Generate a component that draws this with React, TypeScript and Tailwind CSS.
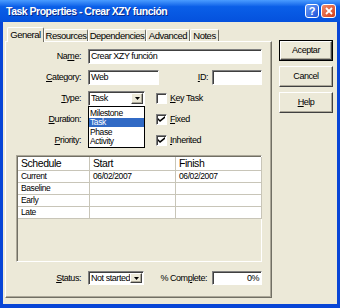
import React from 'react';

const sunken =
  'bg-white border border-t-[#808080] border-l-[#808080] border-r-white border-b-white shadow-[inset_1px_1px_0_#404040]';
const raised =
  'bg-[#ECE9D8] border border-t-white border-l-white border-r-[#404040] border-b-[#404040] shadow-[inset_-1px_-1px_0_#ACA899]';

const U = ({ children }: { children: React.ReactNode }) => <span className="underline">{children}</span>;

const Label = ({ children }: { children: React.ReactNode }) => (
  <div className="w-[76px] shrink-0 text-right pr-[1px] whitespace-nowrap">{children}</div>
);

const Arrow = () => (
  <div className={`${raised} w-[12px] h-full flex items-center justify-center`}>
    <svg width="5" height="3" viewBox="0 0 5 3">
      <path d="M0 0h5L2.5 3z" fill="#000" />
    </svg>
  </div>
);

const Select = ({ value, w }: { value: string; w: string }) => (
  <div className={`${sunken} ${w} h-full flex items-stretch p-[1px]`}>
    <div className="flex-1 pl-[1px] flex items-center whitespace-nowrap overflow-hidden">{value}</div>
    <Arrow />
  </div>
);

const Check = ({ checked, children }: { checked?: boolean; children: React.ReactNode }) => (
  <div className="flex items-center ml-[5px]">
    <div className={`${sunken} w-[11px] h-[11px] flex items-center justify-center`}>
      {checked && (
        <svg width="7" height="7" viewBox="0 0 7 7">
          <path d="M0 2l2 2 5-4v2L2 6 0 4z" fill="#000" />
        </svg>
      )}
    </div>
    <div className="ml-[3px] whitespace-nowrap">{children}</div>
  </div>
);

const Tab = ({ label, w, active }: { label: string; w: string; active?: boolean }) =>
  active ? (
    <div
      className={`${w} h-[15px] -mb-[1px] relative z-10 bg-[#ECE9D8] border-t border-l border-t-white border-l-white border-r border-r-[#716F64] rounded-t-[2px] flex items-center justify-center text-[9.5px] tracking-[-0.5px] whitespace-nowrap`}
    >
      {label}
    </div>
  ) : (
    <div
      className={`${w} h-[12px] mt-[2px] bg-[#ECE9D8] border-t border-l border-t-white border-l-white border-r border-r-[#716F64] rounded-t-[2px] flex items-center justify-center text-[9.5px] tracking-[-0.5px] whitespace-nowrap`}
    >
      {label}
    </div>
  );

const Button = ({ children, def }: { children: React.ReactNode; def?: boolean }) =>
  def ? (
    <div className="w-[54px] h-[21px] border border-black">
      <div className={`${raised} w-full h-full flex items-center justify-center`}>{children}</div>
    </div>
  ) : (
    <div className={`${raised} w-[54px] h-[21px] flex items-center justify-center`}>{children}</div>
  );

const rows = [
  ['Current', '06/02/2007', '06/02/2007'],
  ['Baseline', '', ''],
  ['Early', '', ''],
  ['Late', '', ''],
];

export default function App() {
  return (
    <div className="w-[340px] h-[308px] bg-[#0845d6] flex flex-col font-['Liberation_Sans',Arial,sans-serif] text-[9px] tracking-[-0.45px] text-black leading-none">
      {/* title bar */}
      <div className="h-[22px] shrink-0 flex items-center pl-[6px] pr-[4px] bg-linear-to-b from-[#4a9cff] via-[#0a5fe8] via-30% to-[#0551dd]">
        <span className="flex-1 text-white font-bold text-[10.5px] tracking-[-0.5px] whitespace-nowrap [text-shadow:1px_1px_0_#0a2a8a]">
          Task Properties - Crear XZY función
        </span>
        <div className="flex gap-[2px]">
          <div className="w-[14px] h-[14px] rounded-[3px] border border-white bg-linear-to-br from-[#6a9cf8] to-[#1f52d8] flex items-center justify-center text-white font-bold text-[11px] tracking-normal">
            ?
          </div>
          <div className="w-[15px] h-[14px] rounded-[3px] border border-white bg-linear-to-br from-[#f08a6a] to-[#d23c12] flex items-center justify-center">
            <svg width="8" height="8" viewBox="0 0 8 8">
              <path d="M1 1l6 6M7 1L1 7" stroke="#fff" strokeWidth="1.8" />
            </svg>
          </div>
        </div>
      </div>

      {/* body */}
      <div className="flex-1 mx-[3px] mb-[4px] bg-[#ECE9D8] flex pt-[5px] pl-[2px]">
        <div className="w-[267px] flex flex-col">
          <div className="flex items-start h-[14px] pl-[2px]">
            <Tab label="General" w="w-[37px]" active />
            <Tab label="Resources" w="w-[44px]" />
            <Tab label="Dependencies" w="w-[58px]" />
            <Tab label="Advanced" w="w-[44px]" />
            <Tab label="Notes" w="w-[29px]" />
          </div>
          <div className="h-[257px] border border-t-white border-l-white border-r-[#716F64] border-b-[#716F64] shadow-[inset_-1px_-1px_0_#ACA899] flex flex-col pt-[7px]">
            <div className="flex flex-col gap-[6px] w-[256px]">
              <div className="flex items-center h-[15px] gap-[6px]">
                <Label>
                  Na<U>m</U>e:
                </Label>
                <div className={`${sunken} w-[174px] h-full pl-[2px] flex items-center whitespace-nowrap`}>
                  Crear XZY función
                </div>
              </div>
              <div className="flex items-center h-[15px] gap-[6px]">
                <Label>
                  <U>C</U>ategory:
                </Label>
                <div className={`${sunken} w-[71px] h-full pl-[2px] flex items-center`}>Web</div>
                <div className="ml-auto">
                  <U>I</U>D:
                </div>
                <div className={`${sunken} w-[50px] h-full -ml-[2px]`} />
              </div>
              <div className="flex items-center h-[15px] gap-[6px]">
                <Label>
                  <U>T</U>ype:
                </Label>
                <div className="relative h-full">
                  <Select value="Task" w="w-[57px]" />
                  <div className="absolute left-0 top-full w-[57px] bg-white border border-black z-20 flex flex-col py-[1px] text-[8.5px] tracking-[-0.4px]">
                    <div className="h-[9.5px] pl-[1px] flex items-center">Milestone</div>
                    <div className="h-[9.5px] pl-[1px] flex items-center bg-[#316AC5] text-white">Task</div>
                    <div className="h-[9.5px] pl-[1px] flex items-center">Phase</div>
                    <div className="h-[9.5px] pl-[1px] flex items-center">Activity</div>
                  </div>
                </div>
                <Check>
                  <U>K</U>ey Task
                </Check>
              </div>
              <div className="flex items-center h-[15px] gap-[6px]">
                <Label>
                  <U>D</U>uration:
                </Label>
                <div className={`${sunken} w-[57px] h-full`} />
                <Check checked>
                  <U>F</U>ixed
                </Check>
              </div>
              <div className="flex items-center h-[15px] gap-[6px]">
                <Label>
                  <U>P</U>riority:
                </Label>
                <div className={`${sunken} w-[57px] h-full`} />
                <Check checked>
                  <U>I</U>nherited
                </Check>
              </div>
            </div>

            {/* schedule grid */}
            <div className="ml-[10px] mt-[7px] w-[246px] h-[107px] border border-t-[#ACA899] border-l-[#ACA899] border-r-white border-b-white shadow-[inset_1px_1px_0_#716F64] p-[1px]">
              <div className="grid grid-cols-[72px_86px_86px] bg-white w-fit">
                {['Schedule', 'Start', 'Finish'].map((h) => (
                  <div
                    key={h}
                    className="h-[14px] border-r border-b border-[#C8C5B8] pl-[3px] flex items-center text-[10.5px] tracking-[-0.45px]"
                  >
                    {h}
                  </div>
                ))}
                {rows.map((r) =>
                  r.map((c, i) => (
                    <div
                      key={r[0] + i}
                      className="h-[12px] border-r border-b border-[#C8C5B8] pl-[3px] flex items-center text-[8.5px] tracking-[-0.4px]"
                    >
                      {c}
                    </div>
                  ))
                )}
              </div>
            </div>

            {/* status */}
            <div className="flex items-center h-[14px] mt-[9px] w-[256px]">
              <Label>
                <U>S</U>tatus:
              </Label>
              <div className="ml-[6px] h-full">
                <Select value="Not started" w="w-[56px]" />
              </div>
              <div className="ml-auto whitespace-nowrap">
                % Com<U>p</U>lete:
              </div>
              <div className={`${sunken} w-[50px] h-full ml-[5px] flex items-center justify-end pr-[2px]`}>0%</div>
            </div>
          </div>
        </div>

        {/* buttons */}
        <div className="ml-[7px] mt-[13px] flex flex-col gap-[5px]">
          <Button def>Aceptar</Button>
          <Button>Cancel</Button>
          <Button>
            <U>H</U>elp
          </Button>
        </div>
      </div>
    </div>
  );
}
